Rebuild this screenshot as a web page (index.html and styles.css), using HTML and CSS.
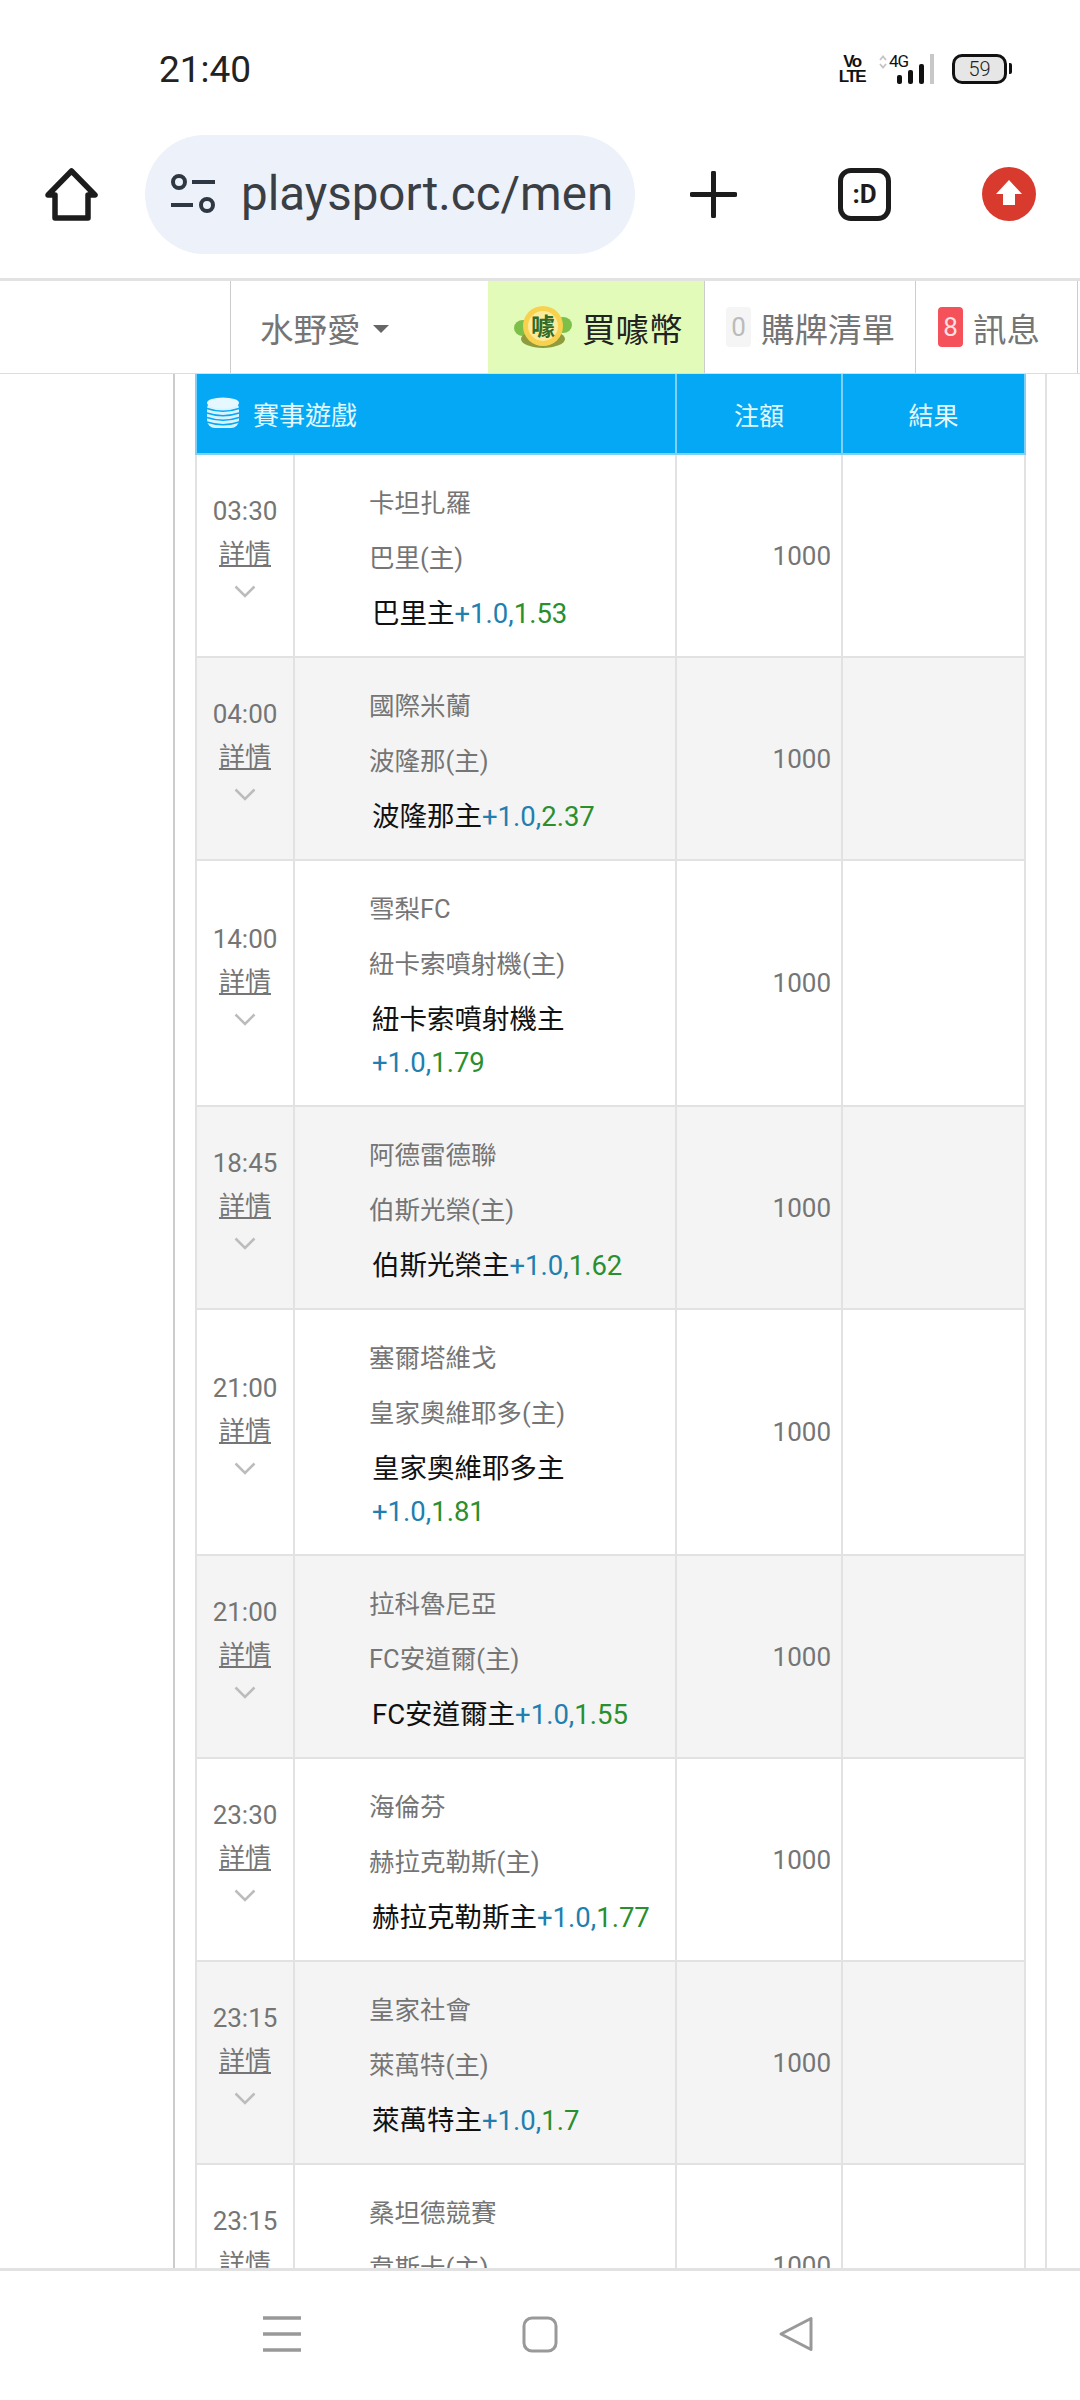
FILE: index.html
```html
<!DOCTYPE html>
<html lang="zh-Hant">
<head>
    <meta charset="UTF-8">
    <meta name="viewport" content="width=device-width, initial-scale=1.0">
    <title>playsport.cc</title>
    <link rel="stylesheet" href="styles.css">
</head>
<body>
    <div class="status-bar">
        <span class="clock">21:40</span>
        <div class="status-icons">
            <div class="volte"><span>Vo</span><span>LTE</span></div>
            <div class="signal">
                <svg class="updown" width="8" height="14" viewBox="0 0 8 14"><path d="M1 5l3-3.500 3 3.500M1 9l3 3.500 3-3.500" fill="none" stroke="#c4c4c4" stroke-width="1.800"/></svg>
                <span class="net">4G</span>
                <svg class="bars" width="30" height="20" viewBox="0 0 30 20"><rect x="1" y="11" width="5" height="9" rx="2"/><rect x="12" y="6" width="5" height="14" rx="2"/><rect x="23" y="0" width="5" height="20" rx="2"/></svg>
            </div>
            <div class="signal-off"></div>
            <div class="battery"><span>59</span></div>
        </div>
    </div>

    <div class="toolbar">
        <svg class="icon-home" width="53" height="53" viewBox="0 0 53 53"><path d="M26.500 3L50 27H43V50H10V27H3Z" fill="none" stroke="#1c1c1c" stroke-width="5.500" stroke-linejoin="round"/></svg>
        <div class="url-pill">
            <svg class="icon-tune" width="44" height="40" viewBox="0 0 44 40"><circle cx="8" cy="8" r="6" fill="none" stroke="#2f3742" stroke-width="4"/><path d="M21 8H44M0 31H22" stroke="#2f3742" stroke-width="4"/><circle cx="36" cy="31" r="6" fill="none" stroke="#2f3742" stroke-width="4"/></svg>
            <span class="url-text">playsport.cc/men</span>
        </div>
        <svg class="icon-plus" width="47" height="47" viewBox="0 0 47 47"><path d="M23.500 2V45M2 23.500H45" stroke="#1c1c1c" stroke-width="5" stroke-linecap="round"/></svg>
        <div class="tab-btn">:D</div>
        <svg class="icon-update" width="54" height="54" viewBox="0 0 54 54"><circle cx="27" cy="27" r="27" fill="#d93a2e"/><path d="M27 13L40 27H33V38H21V27H14Z" fill="#fff"/></svg>
    </div>

    <nav class="site-nav">
        <div class="nav-spacer"></div>
        <div class="nav-cell nav-user">水野愛<span class="caret"></span></div>
        <div class="nav-cell nav-buy">
            <svg class="coin-logo" width="60" height="44" viewBox="0 0 60 44">
                <ellipse cx="10" cy="23" rx="9" ry="8" fill="#7cc04a"/>
                <ellipse cx="50" cy="20" rx="9" ry="8" fill="#7cc04a"/>
                <ellipse cx="30" cy="34" rx="22" ry="9" fill="#8f9c3e"/>
                <circle cx="30" cy="21" r="20" fill="#f8d24e"/>
                <circle cx="30" cy="21" r="15" fill="#fdeb9c"/>
                <text x="30" y="30" text-anchor="middle" class="coin-char">噱</text>
            </svg>
            買噱幣
        </div>
        <div class="nav-cell nav-cart"><span class="badge badge-empty">0</span>購牌清單</div>
        <div class="nav-cell nav-msg"><span class="badge badge-red">8</span>訊息</div>
    </nav>

    <main class="content">
        <div class="content-box">
            <table class="game-table">
                <colgroup>
                    <col class="col-time">
                    <col class="col-game">
                    <col class="col-stake">
                    <col class="col-result">
                </colgroup>
                <thead>
                    <tr>
                        <th colspan="2" class="th-title">
                            <div class="th-inner">
                                <svg class="icon-coins" width="34" height="33" viewBox="0 0 34 33">
                                    <rect x="1" y="4" width="32" height="27" rx="8" fill="#d9f3ff"/>
                                    <ellipse cx="17" cy="6" rx="16" ry="5.500" fill="#e6f8ff"/>
                                    <path d="M1 11.500Q17 17 33 11.500M1 16Q17 21.500 33 16M1 20.500Q17 26 33 20.500M1 25Q17 30.500 33 25" fill="none" stroke="#04a8f5" stroke-width="1.400"/>
                                </svg>
                                賽事遊戲
                            </div>
                        </th>
                        <th>注額</th>
                        <th>結果</th>
                    </tr>
                </thead>
                <tbody>
                    <tr>
                        <td class="td-time">03:30<a class="detail">詳情</a><svg class="chevron" width="22" height="13" viewBox="0 0 22 13"><path d="M1.500 1.500L11 11L20.500 1.500" fill="none" stroke="#bcbcbc" stroke-width="2.500"/></svg></td>
                        <td class="td-game"><div class="team">卡坦扎羅</div><div class="team">巴里(主)</div><div class="bet">巴里主<span class="odds"><span class="handicap">+1.0,</span><span class="price">1.53</span></span></div></td>
                        <td class="td-stake">1000</td>
                        <td></td>
                    </tr>
                    <tr>
                        <td class="td-time">04:00<a class="detail">詳情</a><svg class="chevron" width="22" height="13" viewBox="0 0 22 13"><path d="M1.500 1.500L11 11L20.500 1.500" fill="none" stroke="#bcbcbc" stroke-width="2.500"/></svg></td>
                        <td class="td-game"><div class="team">國際米蘭</div><div class="team">波隆那(主)</div><div class="bet">波隆那主<span class="odds"><span class="handicap">+1.0,</span><span class="price">2.37</span></span></div></td>
                        <td class="td-stake">1000</td>
                        <td></td>
                    </tr>
                    <tr>
                        <td class="td-time">14:00<a class="detail">詳情</a><svg class="chevron" width="22" height="13" viewBox="0 0 22 13"><path d="M1.500 1.500L11 11L20.500 1.500" fill="none" stroke="#bcbcbc" stroke-width="2.500"/></svg></td>
                        <td class="td-game"><div class="team">雪梨FC</div><div class="team">紐卡索噴射機(主)</div><div class="bet">紐卡索噴射機主<span class="odds"><span class="handicap">+1.0,</span><span class="price">1.79</span></span></div></td>
                        <td class="td-stake">1000</td>
                        <td></td>
                    </tr>
                    <tr>
                        <td class="td-time">18:45<a class="detail">詳情</a><svg class="chevron" width="22" height="13" viewBox="0 0 22 13"><path d="M1.500 1.500L11 11L20.500 1.500" fill="none" stroke="#bcbcbc" stroke-width="2.500"/></svg></td>
                        <td class="td-game"><div class="team">阿德雷德聯</div><div class="team">伯斯光榮(主)</div><div class="bet">伯斯光榮主<span class="odds"><span class="handicap">+1.0,</span><span class="price">1.62</span></span></div></td>
                        <td class="td-stake">1000</td>
                        <td></td>
                    </tr>
                    <tr>
                        <td class="td-time">21:00<a class="detail">詳情</a><svg class="chevron" width="22" height="13" viewBox="0 0 22 13"><path d="M1.500 1.500L11 11L20.500 1.500" fill="none" stroke="#bcbcbc" stroke-width="2.500"/></svg></td>
                        <td class="td-game"><div class="team">塞爾塔維戈</div><div class="team">皇家奧維耶多(主)</div><div class="bet">皇家奧維耶多主<span class="odds"><span class="handicap">+1.0,</span><span class="price">1.81</span></span></div></td>
                        <td class="td-stake">1000</td>
                        <td></td>
                    </tr>
                    <tr>
                        <td class="td-time">21:00<a class="detail">詳情</a><svg class="chevron" width="22" height="13" viewBox="0 0 22 13"><path d="M1.500 1.500L11 11L20.500 1.500" fill="none" stroke="#bcbcbc" stroke-width="2.500"/></svg></td>
                        <td class="td-game"><div class="team">拉科魯尼亞</div><div class="team">FC安道爾(主)</div><div class="bet">FC安道爾主<span class="odds"><span class="handicap">+1.0,</span><span class="price">1.55</span></span></div></td>
                        <td class="td-stake">1000</td>
                        <td></td>
                    </tr>
                    <tr>
                        <td class="td-time">23:30<a class="detail">詳情</a><svg class="chevron" width="22" height="13" viewBox="0 0 22 13"><path d="M1.500 1.500L11 11L20.500 1.500" fill="none" stroke="#bcbcbc" stroke-width="2.500"/></svg></td>
                        <td class="td-game"><div class="team">海倫芬</div><div class="team">赫拉克勒斯(主)</div><div class="bet">赫拉克勒斯主<span class="odds"><span class="handicap">+1.0,</span><span class="price">1.77</span></span></div></td>
                        <td class="td-stake">1000</td>
                        <td></td>
                    </tr>
                    <tr>
                        <td class="td-time">23:15<a class="detail">詳情</a><svg class="chevron" width="22" height="13" viewBox="0 0 22 13"><path d="M1.500 1.500L11 11L20.500 1.500" fill="none" stroke="#bcbcbc" stroke-width="2.500"/></svg></td>
                        <td class="td-game"><div class="team">皇家社會</div><div class="team">萊萬特(主)</div><div class="bet">萊萬特主<span class="odds"><span class="handicap">+1.0,</span><span class="price">1.7</span></span></div></td>
                        <td class="td-stake">1000</td>
                        <td></td>
                    </tr>
                    <tr>
                        <td class="td-time">23:15<a class="detail">詳情</a><svg class="chevron" width="22" height="13" viewBox="0 0 22 13"><path d="M1.500 1.500L11 11L20.500 1.500" fill="none" stroke="#bcbcbc" stroke-width="2.500"/></svg></td>
                        <td class="td-game"><div class="team">桑坦德競賽</div><div class="team">韋斯卡(主)</div><div class="bet">韋斯卡主<span class="odds"><span class="handicap">+1.0,</span><span class="price">1.7</span></span></div></td>
                        <td class="td-stake">1000</td>
                        <td></td>
                    </tr>
                </tbody>
            </table>
        </div>
    </main>

    <div class="nav-bar">
        <svg width="38" height="36" viewBox="0 0 38 36"><path d="M0 2H38M0 18H38M0 34H38" stroke="#999" stroke-width="3.500"/></svg>
        <svg width="36" height="37" viewBox="0 0 36 37"><rect x="2" y="2" width="32" height="33" rx="8" fill="none" stroke="#999" stroke-width="3"/></svg>
        <svg width="36" height="36" viewBox="0 0 36 36"><path d="M33 2.500V33.500L3 18Z" fill="none" stroke="#999" stroke-width="3" stroke-linejoin="round"/></svg>
    </div>
</body>
</html>
```

FILE: styles.css
```css
:root {
    --line-color: #e2e2e2;
    --header-color: #04a8f5;
    --text-gray: #757575;
}

html, body {
    margin: 0;
    padding: 0;
}

body {
    width: 1080px;
    height: 2400px;
    overflow: hidden;
    display: flex;
    flex-direction: column;
    background-color: white;
    font-family: Roboto, "Noto Sans CJK TC", sans-serif;
    color: var(--text-gray);
}

/* status bar */
.status-bar {
    flex: none;
    height: 82px;
    padding: 28px 73px 0 159px;
    display: flex;
    align-items: center;
    justify-content: space-between;
}

.clock {
    font-size: 37px;
    color: #222;
}

.status-icons {
    display: flex;
    align-items: center;
}

.volte {
    display: flex;
    flex-direction: column;
    align-items: center;
    width: 22px;
    margin-right: 16px;
    font-family: "Liberation Sans", sans-serif;
    font-size: 17px;
    font-weight: bold;
    line-height: 15px;
    letter-spacing: -1.500px;
    color: #111;
}

.signal {
    position: relative;
    width: 46px;
    height: 30px;
    margin-right: 5px;
}

.updown {
    position: absolute;
    left: 0;
    top: 1px;
}

.net {
    position: absolute;
    left: 10px;
    top: -3px;
    font-size: 17px;
    letter-spacing: -1px;
    color: #111;
}

.bars {
    position: absolute;
    left: 17px;
    top: 10px;
    fill: #111;
}

.signal-off {
    width: 4px;
    height: 30px;
    margin-right: 18px;
    background-color: #c8c8c8;
}

.battery {
    position: relative;
    box-sizing: border-box;
    width: 55px;
    height: 30px;
    border: 3.500px solid #111;
    border-radius: 10px;
    background-color: #e6e6e6;
    display: flex;
    align-items: center;
    justify-content: center;
    font-size: 20px;
    font-weight: 300;
    color: #222;
}

.battery::after {
    content: "";
    position: absolute;
    right: -8px;
    top: 6px;
    width: 3px;
    height: 11px;
    border-radius: 0 2px 2px 0;
    background-color: #111;
}

/* browser toolbar */
.toolbar {
    flex: none;
    height: 168px;
    box-sizing: border-box;
    padding-left: 45px;
    display: flex;
    align-items: center;
}

.url-pill {
    box-sizing: border-box;
    width: 490px;
    height: 119px;
    margin-left: 47px;
    padding-left: 26px;
    border-radius: 60px;
    background-color: #edf1f9;
    display: flex;
    align-items: center;
    overflow: hidden;
}

.icon-tune {
    flex: none;
}

.url-text {
    margin-left: 26px;
    font-size: 47.500px;
    white-space: nowrap;
    color: #3a3f45;
}

.icon-plus {
    margin-left: 55px;
}

.tab-btn {
    box-sizing: border-box;
    width: 53px;
    height: 53px;
    margin-left: 101px;
    border: 5px solid #1c1c1c;
    border-radius: 13px;
    display: flex;
    align-items: center;
    justify-content: center;
    font-size: 26px;
    font-weight: bold;
    color: #1c1c1c;
}

.icon-update {
    margin-left: 91px;
}

/* site nav */
.site-nav {
    flex: none;
    box-sizing: border-box;
    height: 96px;
    border-top: 3px solid #e2e2e2;
    border-bottom: 1px solid #ddd;
    display: flex;
    font-size: 33.500px;
}

.nav-spacer {
    width: 230px;
}

.nav-cell {
    box-sizing: border-box;
    border-left: 1px solid #ccc;
    display: flex;
    align-items: center;
}

.nav-user {
    width: 258px;
    padding-left: 29px;
}

.caret {
    width: 0;
    height: 0;
    margin-left: 12px;
    margin-top: 3px;
    border-left: 8px solid transparent;
    border-right: 8px solid transparent;
    border-top: 8px solid #666;
}

.nav-buy {
    width: 216px;
    padding-left: 25px;
    border-left: none;
    background-color: #e2fbb9;
    color: #222;
}

.coin-logo {
    margin-right: 9px;
}

.coin-char {
    font-size: 24px;
    font-weight: bold;
    fill: #2f6b2a;
}

.nav-cart {
    width: 211px;
    padding-left: 21px;
}

.nav-msg {
    width: 163px;
    padding-left: 22px;
    border-right: 1px solid #ccc;
}

.badge {
    width: 25px;
    height: 40px;
    margin-right: 10px;
    border-radius: 4px;
    display: flex;
    align-items: center;
    justify-content: center;
    font-size: 26px;
}

.badge-empty {
    background-color: #f5f5f5;
    color: #bbb;
}

.badge-red {
    background-color: #f4515a;
    color: #fde0e2;
}

/* game table */
.content {
    flex: 1;
    min-height: 0;
    overflow: hidden;
}

.content-box {
    box-sizing: border-box;
    width: 874px;
    height: 100%;
    margin-left: 173px;
    padding-left: 20px;
    border-left: 2px solid #ccc;
    border-right: 2px solid var(--line-color);
}

.game-table {
    width: 829px;
    table-layout: fixed;
    border-collapse: collapse;
    font-size: 26px;
}

.col-time {
    width: 98px;
}

.col-game {
    width: 382px;
}

.col-stake {
    width: 166px;
}

.col-result {
    width: 183px;
}

.game-table th {
    height: 79px;
    padding: 0;
    border: 2px solid #7fd0f7;
    border-top: none;
    background-color: var(--header-color);
    font-weight: normal;
    font-size: 25px;
    color: #e4f8ff;
}

.th-inner {
    display: flex;
    align-items: center;
    gap: 13px;
    padding-left: 9px;
    font-size: 26px;
}

.game-table td {
    padding: 0;
    border: 2px solid var(--line-color);
}

.game-table tbody tr:nth-child(even) td {
    background-color: #f4f4f4;
}

.td-time {
    text-align: center;
    vertical-align: middle;
    font-size: 26px;
    line-height: 43px;
}

.detail {
    display: block;
    text-decoration: underline;
}

.chevron {
    display: block;
    margin: 9px auto 23px;
}

.td-game {
    padding: 21px 8px 21px 74px !important;
}

.team {
    height: 55px;
    line-height: 55px;
    font-size: 25.500px;
}

.bet {
    margin-top: 6px;
    padding-left: 3px;
    font-size: 27.500px;
    line-height: 43px;
    color: #111;
}

.odds {
    white-space: nowrap;
}

.handicap {
    color: #1f7fb0;
}

.price {
    color: #2a8f2e;
}

.td-stake {
    text-align: right;
    padding-right: 10px !important;
    font-size: 26px;
}

/* android nav */
.nav-bar {
    flex: none;
    box-sizing: border-box;
    height: 132px;
    border-top: 3px solid #e2e2e2;
    padding: 45px 266px 0 263px;
    display: flex;
    align-items: flex-start;
    justify-content: space-between;
    background-color: white;
}
```
